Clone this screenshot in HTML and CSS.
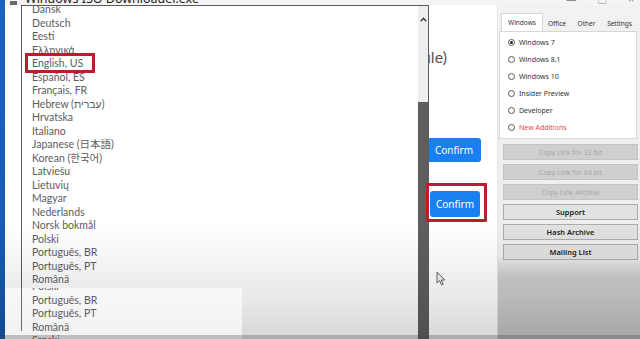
FILE: index.html
```html
<!DOCTYPE html>
<html lang="en">
<head>
<meta charset="utf-8">
<title>Windows ISO Downloader</title>
<link rel="stylesheet" href="styles.css">
</head>
<body>
<div class="screen">
  <div class="desk"></div>
  <div class="window">
    <div class="titlebar">
      <span class="appicon"></span>
      <span class="title">Windows ISO Downloader.exe</span>
      <span class="controls"><span>&#8212;</span><span>&#9633;</span><span>&#215;</span></span>
    </div>
    <div class="client">
      <div class="main">
        <div class="heading">Choose the language (ISO file)</div>
        <button class="confirm first">Confirm</button>
        <div class="mark">
          <button class="confirm second">Confirm</button>
        </div>
      </div>
      <div class="side">
        <div class="panel">
          <div class="tabs">
            <span class="tab active w1">Windows</span>
            <span class="tab w2">Office</span>
            <span class="tab w3">Other</span>
            <span class="tab w4">Settings</span>
          </div>
          <div class="tabbody">
            <div class="radio"><span class="dot checked"></span>Windows 7</div>
            <div class="radio"><span class="dot"></span>Windows 8.1</div>
            <div class="radio"><span class="dot"></span>Windows 10</div>
            <div class="radio"><span class="dot"></span>Insider Preview</div>
            <div class="radio"><span class="dot"></span>Developer</div>
            <div class="radio new"><span class="dot"></span>New Additions</div>
          </div>
        </div>
        <div class="btns">
          <button class="sbtn off">Copy Link for 32 bit</button>
          <button class="sbtn off">Copy Link for 64 bit</button>
          <button class="sbtn off">Copy Link Archive</button>
          <button class="sbtn">Support</button>
          <button class="sbtn">Hash Archive</button>
          <button class="sbtn">Mailing List</button>
        </div>
      </div>
    </div>
  </div>

  <div class="dropdown">
    <div class="items">
      <ul class="list">
        <li>Dansk</li>
        <li>Deutsch</li>
        <li>Eesti</li>
        <li>Ελληνικά</li>
        <li>English, US</li>
        <li>Español, ES</li>
        <li>Français, FR</li>
        <li>Hebrew (עברית)</li>
        <li>Hrvatska</li>
        <li>Italiano</li>
        <li>Japanese (日本語)</li>
        <li>Korean (한국어)</li>
        <li>Latviešu</li>
        <li>Lietuvių</li>
        <li>Magyar</li>
        <li>Nederlands</li>
        <li>Norsk bokmål</li>
        <li>Polski</li>
        <li>Português, BR</li>
        <li>Português, PT</li>
        <li>Română</li>
        <li>Srpski</li>
        <li>Slovenčina</li>
      </ul>
    </div>
    <div class="scroll">
      <div class="track">
        <svg class="uparrow" width="7" height="5" viewBox="0 0 7 5"><path d="M0.8 4.2 L3.5 1.2 L6.2 4.2" fill="none" stroke="#333" stroke-width="1.3"/></svg>
      </div>
      <div class="thumb"></div>
    </div>
  </div>

  <div class="mark1"></div>

  <svg class="cursor" width="10" height="15" viewBox="0 0 10 15"><path d="M1 1 L1 12 L3.6 9.6 L5.6 14 L7.2 13.3 L5.3 9 L8.8 9 Z" fill="#f4f4f4" stroke="#666" stroke-width="1"/></svg>

  <div class="fade"></div>

  <div class="glitch">
    <div class="gl-inner">
      <ul class="list">
        <li>Polski</li>
        <li>Português, BR</li>
        <li>Português, PT</li>
        <li>Română</li>
        <li>Srpski</li>
      </ul>
    </div>
  </div>

  <div class="band"></div>
</div>
</body>
</html>
```

FILE: styles.css
```css
* {
  box-sizing: border-box;
  margin: 0;
  padding: 0;
}

html, body {
  width: 640px;
  height: 339px;
  overflow: hidden;
}

body {
  font-family: "Noto Sans", "Open Sans", "Noto Sans CJK JP", "Noto Sans CJK KR", sans-serif;
  background: #ffffff;
}

.screen {
  position: relative;
  width: 640px;
  height: 339px;
  display: flex;
  overflow: hidden;
}

.desk {
  width: 5px;
  flex: none;
  background: linear-gradient(#1c63bd, #1557ad);
}

.window {
  flex: 1;
  display: flex;
  flex-direction: column;
  background: #ffffff;
}

/* title bar: only its bottom edge is visible */
.titlebar {
  height: 5px;
  flex: none;
  overflow: hidden;
  display: flex;
  align-items: flex-end;
  background: #f4f4f4;
  color: #1e1e1e;
  font-size: 12.5px;
  line-height: 12px;
}

.appicon {
  width: 7px;
  height: 4px;
  margin: 0 8px 0 5px;
  background: #6a6a6a;
  flex: none;
}

.title {
  white-space: nowrap;
}

.controls {
  margin-left: auto;
  display: flex;
  gap: 21px;
  padding-right: 6px;
  color: #8a8a8a;
  font-size: 10px;
}

.client {
  flex: 1;
  display: flex;
  min-height: 0;
}

.main {
  flex: 1;
  background: #ffffff;
}

.heading {
  margin-top: 42px;
  padding-right: 50px;
  text-align: right;
  white-space: nowrap;
  font-size: 16px;
  line-height: 20px;
  color: #555555;
  font-family: "Lato", "Open Sans", sans-serif;
  font-weight: 400;
}

.confirm {
  display: block;
  border: none;
  border-radius: 3px;
  background: #1a7ff0;
  color: #ffffff;
  font-family: "Noto Sans", sans-serif;
  font-size: 10px;
}

.confirm.first {
  width: 54px;
  height: 24px;
  margin: 71px 0 0 422px;
}

.mark {
  position: relative;
  z-index: 5;
  width: 61px;
  height: 39px;
  margin: 21px 0 0 421px;
  border: 3px solid #b5202e;
  padding: 5px 0 0 1px;
}

.confirm.second {
  width: 50px;
  height: 26px;
}

/* right control panel */
.side {
  width: 143px;
  flex: none;
  padding: 8px 0 0 1px;
  background: linear-gradient(#f2f2f2 0, #ededed 250px, #cdcdcd 272px, #c6c6c6 334px);
  border-left: 1px solid #e6e6e6;
}

.panel {
  width: 138px;
}

.tabs {
  display: flex;
  align-items: flex-end;
  height: 18px;
  padding-left: 2px;
  font-size: 6.5px;
  color: #333;
  white-space: nowrap;
}

.tab {
  height: 15px;
  line-height: 15px;
  text-align: center;
}

.tab.active {
  height: 18px;
  line-height: 17px;
  background: #ffffff;
  border: 1px solid #d6d6d6;
  border-bottom: none;
}

.w1 { width: 42px; }
.w2 { width: 28px; }
.w3 { width: 31px; }
.w4 { width: 35px; }

.tabbody {
  height: 108px;
  background: #ffffff;
  border: 1px solid #d6d6d6;
  padding: 2px 0 0 8px;
}

.radio {
  height: 17px;
  display: flex;
  align-items: center;
  gap: 4px;
  font-size: 7px;
  color: #333;
  white-space: nowrap;
}

.radio.new {
  color: #e24a4a;
}

.dot {
  width: 7px;
  height: 7px;
  border: 1px solid #555;
  border-radius: 50%;
  flex: none;
  display: flex;
  align-items: center;
  justify-content: center;
  background: #fff;
}

.dot.checked::after {
  content: "";
  width: 3px;
  height: 3px;
  border-radius: 50%;
  background: #222;
}

.btns {
  margin-top: 5px;
  padding-left: 4px;
  display: flex;
  flex-direction: column;
  gap: 4px;
}

.sbtn {
  width: 135px;
  height: 16px;
  background: #e1e1e1;
  border: 1px solid #adadad;
  color: #222;
  font-family: "Noto Sans", sans-serif;
  font-size: 7.5px;
  font-weight: 600;
}

.sbtn.off {
  background: #cfcfcf;
  border-color: #c4c4c4;
  color: #a8a8a8;
  font-size: 7px;
  font-weight: 400;
}

/* language dropdown popup, over the window */
.dropdown {
  position: absolute;
  left: 21px;
  top: 5px;
  width: 408px;
  height: 340px;
  border: 1px solid #5c5c5c;
  border-bottom: none;
  background: #ffffff;
  display: flex;
  z-index: 2;
}

.items {
  flex: 1;
  overflow: hidden;
  padding-left: 10px;
}

.list {
  list-style: none;
  margin-top: -3px;
  font-family: "Lato", "Noto Sans", "Noto Sans CJK JP", "Noto Sans CJK KR", sans-serif;
  font-size: 10.5px;
  line-height: 13.5px;
  color: #5c5c5c;
  white-space: nowrap;
}

.scroll {
  width: 10px;
  flex: none;
  display: flex;
  flex-direction: column;
}

.track {
  height: 96px;
  background: #eeeeee;
  display: flex;
  justify-content: center;
  padding-top: 11px;
}

.uparrow {
  display: block;
}

.thumb {
  flex: 1;
  background: #5e5e5e;
}

.mark1 {
  position: absolute;
  left: 25px;
  top: 53px;
  width: 70px;
  height: 20px;
  border: 3px solid #b5202e;
  z-index: 5;
}

.cursor {
  position: absolute;
  left: 436px;
  top: 271px;
  z-index: 5;
}

.fade {
  position: absolute;
  inset: 0;
  pointer-events: none;
  z-index: 6;
  background: linear-gradient(to bottom, rgba(0,0,0,0) 0, rgba(0,0,0,0) 225px, rgba(0,0,0,0.09) 300px, rgba(0,0,0,0.15) 334px);
}

.glitch {
  position: absolute;
  left: 5px;
  top: 288px;
  width: 237px;
  height: 51px;
  overflow: hidden;
  padding-left: 16px;
  background: linear-gradient(#f8f8f8, #f1f1f1);
  z-index: 7;
}

.gl-inner {
  height: 100%;
  border-left: 1px solid #6a6a6a;
  padding-left: 10px;
}

.gl-inner .list {
  margin-top: -8px;
}

.band {
  position: absolute;
  left: 0;
  right: 0;
  bottom: 0;
  height: 4px;
  background: rgba(70,70,70,0.3);
  z-index: 8;
}
```
